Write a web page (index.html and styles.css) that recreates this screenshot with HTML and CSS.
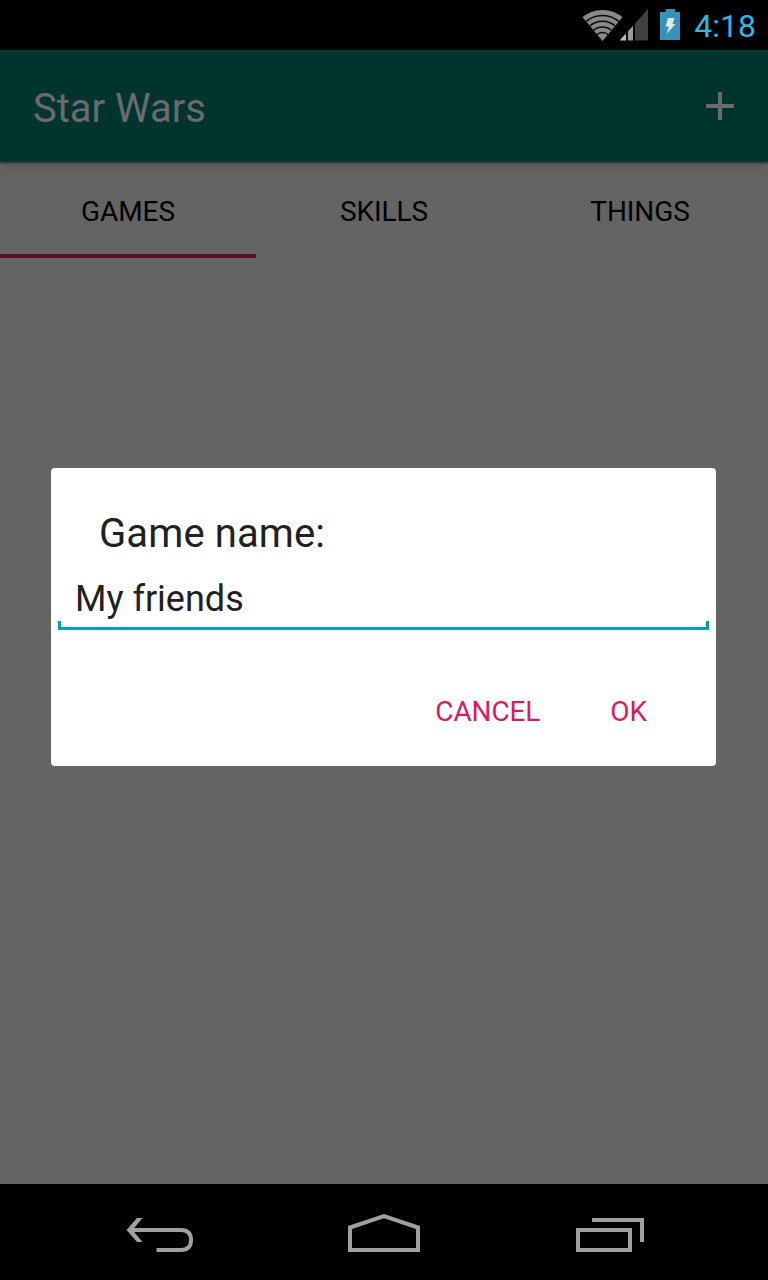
FILE: index.html
```html
<!DOCTYPE html>
<html lang="en">
<head>
<meta charset="utf-8">
<title>Star Wars</title>
<link rel="stylesheet" href="styles.css">
</head>
<body>
<div class="screen">
  <div class="status">
    <svg class="signals" width="104" height="50" viewBox="0 0 104 50">
      <clipPath id="fan"><path d="M22.5 41L2.8 17.5V9H42.2V17.5Z"/></clipPath>
      <g clip-path="url(#fan)">
        <circle cx="22.5" cy="41" r="31" fill="#888"/>
        <g fill="none" stroke="#080808" stroke-width="1.4"><circle cx="22.5" cy="41" r="25.5"/><circle cx="22.5" cy="41" r="19.7"/><circle cx="22.5" cy="41" r="14"/><circle cx="22.5" cy="41" r="8.5"/></g>
      </g>
      <path fill="#bbb" d="M39.5 40.5L46 33.5V40.5Z"/>
      <path fill="#999" d="M48 40.5V31.3L53 25.7V40.5Z"/>
      <path fill="#404040" d="M55 40.5V23.5L68 9V40.5Z"/>
      <path fill="#3792b8" d="M86 9h9v3h5v28H80V12h5.500z"/>
      <path fill="#dceaf0" d="M88 18H94.500L92.500 24H95.500L86.500 34L89 26.500H85.500Z"/>
    </svg>
    <span class="clock">4:18</span>
  </div>
  <header class="bar">
    <h1 class="title">Star Wars</h1>
    <svg class="add" width="28" height="28" viewBox="0 0 28 28"><path d="M14 0V28M0 14H28" stroke="#6b6b6b" stroke-width="4"/></svg>
  </header>
  <nav class="tabs"><span class="tab active">GAMES</span><span class="tab">SKILLS</span><span class="tab">THINGS</span></nav>
  <main class="content">
    <section class="dialog">
      <h2 class="label">Game name:</h2>
      <div class="field">My friends</div>
      <div class="actions"><span class="cancel">CANCEL</span><span class="ok">OK</span></div>
    </section>
  </main>
  <footer class="nav">
    <svg width="768" height="96" viewBox="0 0 768 96" fill="none" stroke="#a0a0a0" stroke-width="4">
      <path d="M130 46H181Q191 46 191 56T181 66H156.500"/>
      <path fill="#a0a0a0" stroke="none" d="M137 34H142.500L132.500 46L142.500 58H137L126.500 46Z"/>
      <path d="M350 66V43.500L384 32L418 43.500V66ZM578 46H630V66H578ZM592 36H642V58"/>
    </svg>
  </footer>
</div>
</body>
</html>
```
FILE: styles.css
```css
* { box-sizing: border-box; }
body { margin: 0; font-family: Roboto, sans-serif; }
.screen { width: 768px; height: 1280px; display: flex; flex-direction: column; background: #646464; }
.status { height: 50px; background: #000; display: flex; justify-content: flex-end; padding-right: 12px; }
.signals { margin-right: 10px; flex: none; }
.clock { width: 62px; text-align: right; color: #33b5e5; font-size: 32px; line-height: 52px; }
.bar { height: 112px; background: #00352f; display: flex; align-items: center; justify-content: space-between; padding: 0 34px 0 33px; box-shadow: 0 1px 2px rgba(0,0,0,.45), 0 2px 10px rgba(0,0,0,.2); }
.title { margin: 4px 0 0; font-size: 40px; font-weight: 400; color: #6b6b6b; }
.tabs { height: 96px; display: flex; }
.tab { flex: 1; text-align: center; font-size: 28px; line-height: 100px; letter-spacing: -0.1px; color: #000; }
.active { border-bottom: 4px solid #560e29; }
.content { flex: 1; padding: 210px 52px 0 51px; }
.dialog { height: 298px; background: #fff; border-radius: 4px; padding: 41px 7px 0; color: #212121; }
.label { margin: 0 0 0 41px; font-size: 40px; line-height: 50px; font-weight: 400; letter-spacing: 0.1px; }
.field {
  height: 71px;
  padding: 18px 17px 0;
  font-size: 36px;
  line-height: 44px;
  background:
    linear-gradient(#0099cc, #0099cc) left bottom / 100% 3px no-repeat,
    linear-gradient(#0099cc, #0099cc) left bottom / 3px 9px no-repeat,
    linear-gradient(#0099cc, #0099cc) right bottom / 3px 9px no-repeat;
}
.actions { display: flex; justify-content: flex-end; gap: 70px; margin-top: 65px; padding-right: 62px; font-size: 28px; line-height: 34px; letter-spacing: -0.1px; color: #d81b60; }
.nav { height: 96px; background: #000; }
```
